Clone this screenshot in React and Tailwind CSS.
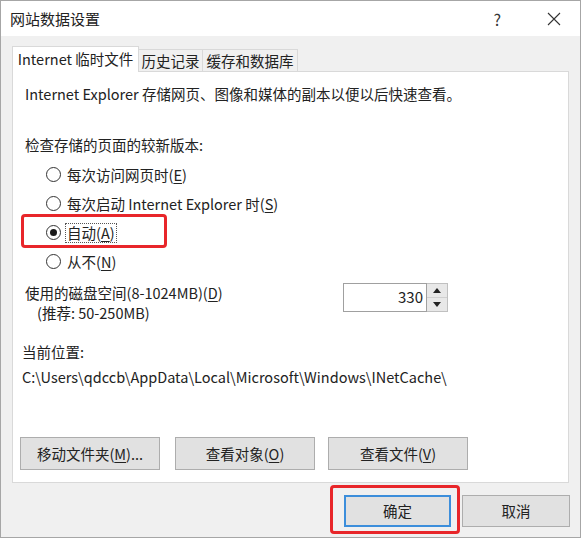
import React from "react";

const F = { fontFamily: '"Noto Sans CJK SC", "Noto Sans", sans-serif' };

function U({ children }) {
  return <span className="underline underline-offset-2 decoration-1">{children}</span>;
}

function Radio({ checked, children, focus }) {
  return (
    <div className="flex h-[29px] items-center pl-[21px]">
      <div className="flex h-[15px] w-[15px] items-center justify-center rounded-full border border-[#333] bg-white">
        {checked && <div className="h-[7px] w-[7px] rounded-full bg-[#1a1a1a]" />}
      </div>
      <div className={focus ? "ml-[4px] border border-dotted border-[#555] px-[1px] leading-[18px]" : "ml-[6px] leading-[20px]"}>
        {children}
      </div>
    </div>
  );
}

function Btn({ children, w }) {
  return (
    <div className={`flex h-[33px] ${w} items-center justify-center border border-[#adadad] bg-[#e1e1e1]`}>
      {children}
    </div>
  );
}

export default function App() {
  return (
    <div className="h-[542px] w-[584px] overflow-hidden bg-white text-[14.5px] text-[#222]" style={F}>
      <div className="relative flex h-[538px] w-[581px] flex-col border border-[#a6a6a6] bg-[#f0f0f0]">
        {/* title bar */}
        <div className="flex h-[35px] shrink-0 items-center bg-white pl-[9px]">
          <div className="text-[15px] leading-[20px]">网站数据设置</div>
          <div className="ml-auto mr-[46px] text-[16px] leading-[20px] text-[#333]">?</div>
          <svg width="14" height="14" viewBox="0 0 14 14" className="mr-[19px]">
            <path d="M1 1 L13 13 M13 1 L1 13" stroke="#333" strokeWidth="1.1" fill="none" />
          </svg>
        </div>

        {/* body */}
        <div className="flex flex-1 flex-col px-[11px] pt-[10px]">
          {/* tabs */}
          <div className="relative z-10 -mb-[1px] flex h-[26px] items-end">
            <div className="flex h-[26px] w-[127px] items-center justify-center border border-b-0 border-[#d9d9d9] bg-white pb-[2px]">
              Internet 临时文件
            </div>
            <div className="flex h-[23px] w-[64px] items-center justify-center border border-l-0 border-[#d9d9d9] bg-[#f0f0f0]">
              历史记录
            </div>
            <div className="flex h-[23px] w-[95px] items-center justify-center border border-l-0 border-[#d9d9d9] bg-[#f0f0f0]">
              缓存和数据库
            </div>
          </div>

          {/* panel */}
          <div className="relative flex h-[412px] flex-col border border-[#d9d9d9] bg-white pl-[12px] pt-[12px]">
            <div className="leading-[20px]">Internet Explorer 存储网页、图像和媒体的副本以便以后快速查看。</div>
            <div className="mt-[31px] leading-[20px]">检查存储的页面的较新版本:</div>
            <div className="mt-[5px] flex flex-col">
              <Radio>
                每次访问网页时(<U>E</U>)
              </Radio>
              <Radio>
                每次启动 Internet Explorer 时(<U>S</U>)
              </Radio>
              <Radio checked focus>
                自动(<U>A</U>)
              </Radio>
              <Radio>
                从不(<U>N</U>)
              </Radio>
            </div>

            <div className="mt-[7px] flex items-start">
              <div className="w-[318px] leading-[20px]">
                <div>
                  使用的磁盘空间(8-1024MB)(<U>D</U>)
                </div>
                <div className="pl-[12px]">(推荐: 50-250MB)</div>
              </div>
              <div className="flex h-[29px]">
                <div className="flex w-[84px] items-center justify-end border border-[#a0a0a0] pr-[3px] text-[15px]">330</div>
                <div className="flex w-[21px] flex-col border border-l-0 border-[#c0c0c0] bg-[#e8e8e8]">
                  <div className="flex flex-1 items-center justify-center border-b border-[#d0d0d0]">
                    <svg width="8" height="5" viewBox="0 0 8 5">
                      <path d="M0 5 L4 0 L8 5 Z" fill="#222" />
                    </svg>
                  </div>
                  <div className="flex flex-1 items-center justify-center">
                    <svg width="8" height="5" viewBox="0 0 8 5">
                      <path d="M0 0 L4 5 L8 0 Z" fill="#222" />
                    </svg>
                  </div>
                </div>
              </div>
            </div>

            <div className="-ml-[3px] mt-[19px] leading-[20px]">当前位置:</div>
            <div className="-ml-[3px] mt-[5px] leading-[20px]">C:\Users\qdccb\AppData\Local\Microsoft\Windows\INetCache\</div>

            <div className="-ml-[5px] mt-[50px] flex">
              <Btn w="w-[140px]">
                移动文件夹(<U>M</U>)...
              </Btn>
              <div className="ml-[15px]">
                <Btn w="w-[140px]">
                  查看对象(<U>O</U>)
                </Btn>
              </div>
              <div className="ml-[13px]">
                <Btn w="w-[140px]">
                  查看文件(<U>V</U>)
                </Btn>
              </div>
            </div>

            {/* red highlight around 自动 */}
            <div className="absolute left-[8px] top-[142px] h-[34px] w-[146px] rounded-[4px] border-[3px] border-[#e8262a]" />
          </div>

          {/* OK / Cancel */}
          <div className="mt-[12px] flex justify-end pr-[0px]">
            <div className="relative">
              <div className="flex h-[32px] w-[107px] items-center justify-center border-2 border-[#3c8edb] bg-[#e1e1e1]">确定</div>
              <div className="absolute -left-[14px] -top-[10px] h-[49px] w-[130px] rounded-[4px] border-[3px] border-[#e8262a]" />
            </div>
            <div className="ml-[11px] -mr-[1px] flex h-[32px] w-[108px] items-center justify-center border border-[#adadad] bg-[#e1e1e1]">取消</div>
          </div>
        </div>
      </div>
    </div>
  );
}
